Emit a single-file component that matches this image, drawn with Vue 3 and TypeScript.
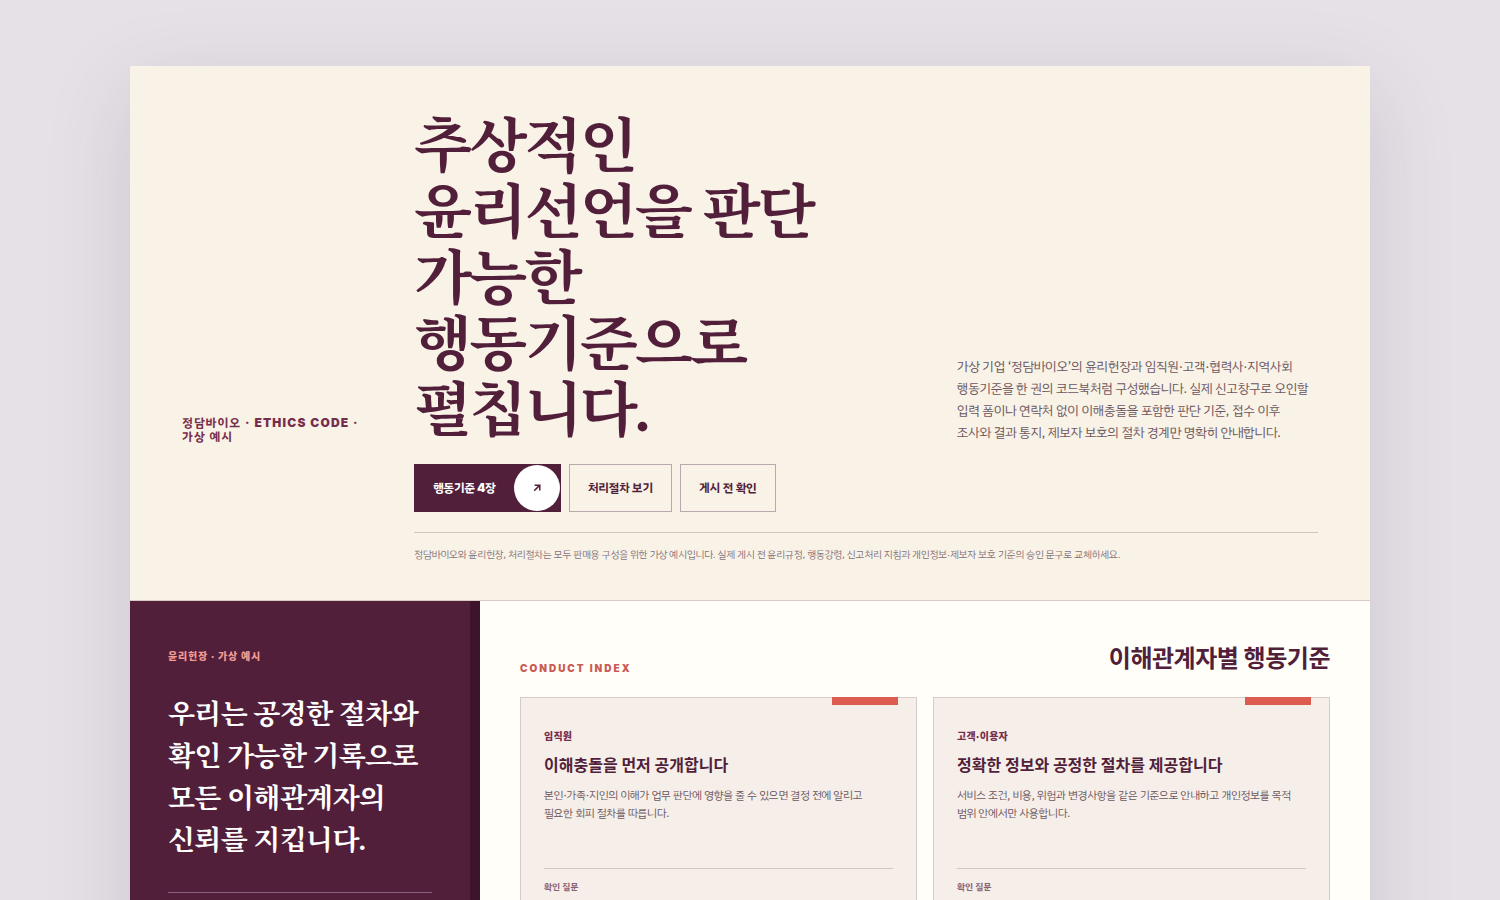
<script setup lang="ts">
interface Action {
  label: string
  primary: boolean
}

interface Conduct {
  group: string
  title: string
  body: string
  question: string
}

const actions: Action[] = [
  { label: '행동기준 4장', primary: true },
  { label: '처리절차 보기', primary: false },
  { label: '게시 전 확인', primary: false },
]

const conducts: Conduct[] = [
  {
    group: '임직원',
    title: '이해충돌을 먼저 공개합니다',
    body: '본인·가족·지인의 이해가 업무 판단에 영향을 줄 수 있으면 결정 전에 알리고 필요한 회피 절차를 따릅니다.',
    question: '확인 질문',
  },
  {
    group: '고객·이용자',
    title: '정확한 정보와 공정한 절차를 제공합니다',
    body: '서비스 조건, 비용, 위험과 변경사항을 같은 기준으로 안내하고 개인정보를 목적 범위 안에서만 사용합니다.',
    question: '확인 질문',
  },
]
</script>

<template>
  <main class="shell">
    <header class="hero">
      <p class="brand">정담바이오 · ETHICS CODE · 가상 예시</p>
      <h1>추상적인 윤리선언을 판단 가능한 행동기준으로 펼칩니다.</h1>
      <p class="lead">
        가상 기업 ‘정담바이오’의 윤리헌장과 임직원·고객·협력사·지역사회 행동기준을 한 권의 코드북처럼
        구성했습니다. 실제 신고창구로 오인할 입력 폼이나 연락처 없이 이해충돌을 포함한 판단 기준, 접수 이후
        조사와 결과 통지, 제보자 보호의 절차 경계만 명확히 안내합니다.
      </p>
      <nav class="actions">
        <a
          v-for="action in actions"
          :key="action.label"
          href="#conduct"
          class="action"
          :class="{ primary: action.primary }"
        >
          <span>{{ action.label }}</span>
          <span v-if="action.primary" class="disc">
            <svg viewBox="0 0 8 8" width="8" height="8" aria-hidden="true">
              <path d="M1.6 1.2H6.8V6.4M6.6 1.4L1.2 6.8" />
            </svg>
          </span>
        </a>
      </nav>
      <p class="note">
        정담바이오와 윤리헌장, 처리절차는 모두 판매용 구성을 위한 가상 예시입니다. 실제 게시 전 윤리규정, 행동강령,
        신고처리 지침과 개인정보·제보자 보호 기준의 승인 문구로 교체하세요.
      </p>
    </header>

    <div class="content">
      <aside class="charter">
        <p class="charter-label">윤리헌장 · 가상 예시</p>
        <blockquote>우리는 공정한 절차와 확인 가능한 기록으로 모든 이해관계자의 신뢰를 지킵니다.</blockquote>
        <hr />
      </aside>

      <section id="conduct" class="index">
        <div class="index-head">
          <p>CONDUCT INDEX</p>
          <h2>이해관계자별 행동기준</h2>
        </div>
        <div class="cards">
          <article v-for="item in conducts" :key="item.group" class="card">
            <p class="group">{{ item.group }}</p>
            <h3>{{ item.title }}</h3>
            <p class="body">{{ item.body }}</p>
            <p class="question">{{ item.question }}</p>
          </article>
        </div>
      </section>
    </div>
  </main>
</template>

<style>
html,
body {
  height: 100%;
  overflow: hidden;
  background: #e6e1e7;
}
</style>

<style scoped>
.shell {
  --plum: #521f3b;
  --text: 'IBM Plex Sans KR', 'Noto Sans CJK KR', sans-serif;
  --label: Inter, 'Noto Sans CJK KR', sans-serif;
  --display: Georgia, 'Liberation Serif', 'Noto Serif KR', 'Noto Serif CJK KR', serif;
  width: min(1240px, calc(100% - 48px));
  margin: 66px auto;
  background: #fffef9;
  color: var(--plum);
  font-family: var(--text);
  font-size: 16px;
  word-break: keep-all;
  box-shadow: 0 24px 80px rgba(60, 36, 72, 0.15);
}

p,
h1,
h2,
h3,
blockquote {
  margin: 0;
}

.hero {
  display: grid;
  grid-template-columns: 184px minmax(0, 1.37fr) minmax(0, 1fr);
  column-gap: 48px;
  row-gap: 20px;
  align-items: end;
  padding: 48px 52px 37px;
  background: #f9f2e7;
  border-bottom: 1px solid #d8cac4;
}

.brand {
  color: #762e4c;
  font-family: Inter, var(--text);
  font-size: 12px;
  font-weight: 900;
  line-height: 14px;
  letter-spacing: 0.1em;
}

h1 {
  font-family: var(--display);
  font-size: 60px;
  font-weight: 700;
  line-height: 66px;
  letter-spacing: -0.045em;
}

.lead {
  padding-right: 8px;
  color: #6b5660;
  font-size: 13px;
  line-height: 22px;
  letter-spacing: -0.02em;
}

.actions {
  grid-column: 2 / -1;
  display: flex;
  gap: 8px;
}

.action {
  display: flex;
  align-items: center;
  gap: 18px;
  height: 48px;
  box-sizing: border-box;
  padding: 0 18px;
  border: 1px solid #baa9af;
  color: var(--plum);
  font-size: 12px;
  font-weight: 700;
  letter-spacing: -0.02em;
  text-decoration: none;
}

.primary {
  padding-right: 0;
  background: var(--plum);
  border-color: var(--plum);
  color: #fff;
  font-family: Inter, var(--text);
  font-weight: 900;
}

.disc {
  display: grid;
  place-items: center;
  width: 46px;
  height: 46px;
  border-radius: 50%;
  background: #fff;
}

.disc path {
  fill: none;
  stroke: #521f3b;
  stroke-width: 1.5;
}

.note {
  grid-column: 2 / -1;
  padding-top: 14px;
  border-top: 1px solid #d3c5c0;
  color: #85737a;
  font-size: 10px;
  line-height: 16px;
  letter-spacing: -0.02em;
}

.content {
  display: grid;
  grid-template-columns: 350px minmax(0, 1fr);
}

.charter {
  box-sizing: border-box;
  padding: 48px 38px;
  background: var(--plum);
  border-right: 10px solid #3d142b;
  color: #fff;
}

.charter-label {
  color: #f39b92;
  font-family: var(--label);
  font-size: 10px;
  font-weight: 900;
  line-height: 14px;
  letter-spacing: 0.08em;
}

blockquote {
  margin-top: 31px;
  font-family: var(--display);
  font-size: 28px;
  font-weight: 700;
  line-height: 42px;
  letter-spacing: -0.025em;
}

hr {
  margin: 30px 0 200px;
  border: 0;
  border-top: 1px solid #87627a;
}

.index {
  padding: 41px 40px 40px;
}

.index-head {
  display: flex;
  justify-content: space-between;
  align-items: flex-end;
}

.index-head p {
  color: #c95c54;
  font-family: var(--label);
  font-size: 10px;
  font-weight: 900;
  line-height: 16px;
  letter-spacing: 0.2em;
}

h2 {
  font-family: var(--label);
  font-size: 24px;
  font-weight: 700;
  line-height: 34px;
  letter-spacing: -0.02em;
}

.cards {
  display: grid;
  grid-template-columns: 1fr 1fr;
  gap: 16px;
  margin-top: 21px;
}

.card {
  position: relative;
  padding: 30px 23px;
  background: #f6efe9;
  border: 1px solid #d8cac4;
}

.card::before {
  content: '';
  position: absolute;
  top: -1px;
  right: 18px;
  width: 66px;
  height: 8px;
  background: #dc5c50;
}

.group {
  color: #762e4c;
  font-family: var(--label);
  font-size: 10px;
  font-weight: 900;
  line-height: 16px;
  letter-spacing: 0.02em;
}

h3 {
  margin-top: 10px;
  font-family: var(--label);
  font-size: 16px;
  font-weight: 700;
  line-height: 22px;
}

.body {
  min-height: 71px;
  margin-top: 11px;
  color: #6b5660;
  font-size: 11px;
  line-height: 18px;
  letter-spacing: -0.02em;
}

.question {
  margin-top: 10px;
  padding: 10px 0 160px;
  border-top: 1px solid #d3c5c0;
  color: #8a6174;
  font-size: 9px;
  font-weight: 900;
  line-height: 16px;
}
</style>
